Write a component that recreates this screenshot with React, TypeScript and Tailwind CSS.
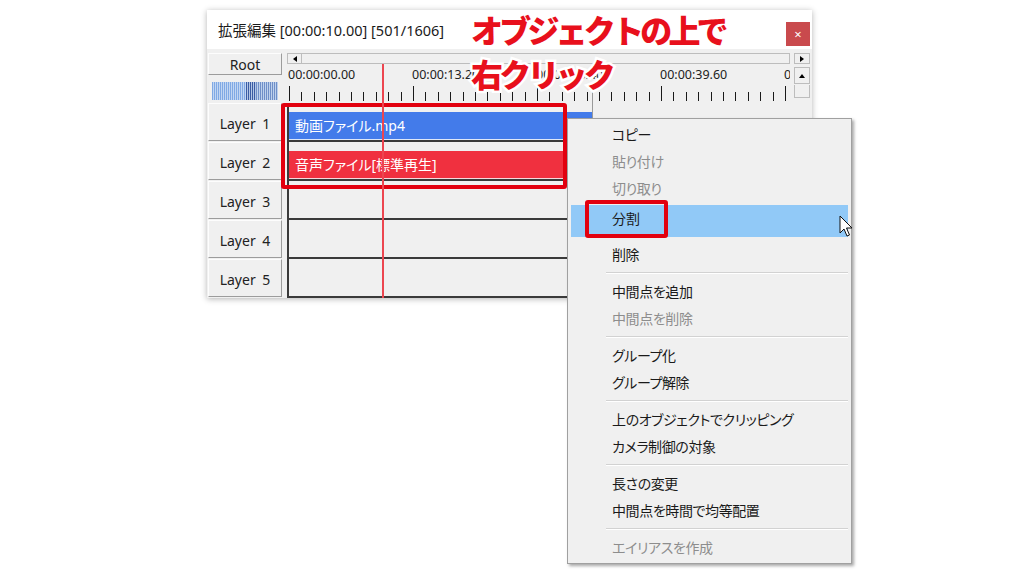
import React from "react";

function ScaleBar() {
  const rects: React.ReactNode[] = [];
  for (let x = 0; x < 66; x += 2) {
    const c = x < 33 ? "#80a9e4" : x < 43 ? "#3a5ca4" : "#6f8fc8";
    rects.push(<rect key={x} x={x} y={0} width={1.2} height={18} fill={c} />);
  }
  return (
    <svg width="66" height="18" className="block bg-[#d2e1f5]">
      {rects}
    </svg>
  );
}

function RulerTicks() {
  const ticks: React.ReactNode[] = [];
  for (let i = 0; i <= 40; i++) {
    const x = Math.round(2 + 12.4 * i) + 0.5;
    const major = i % 10 === 0;
    ticks.push(
      <line key={i} x1={x} x2={x} y1={major ? 22 : 28} y2={37} stroke="#1a1a1a" strokeWidth={1} />
    );
  }
  return (
    <svg width="503" height="39" className="absolute left-0 top-0">
      {ticks}
    </svg>
  );
}

function LayerButton({ n }: { n: number }) {
  return (
    <div className="h-[38px] mb-[1px] w-[74px] flex items-center justify-center pt-[3px] border border-t-[#fdfdfd] border-l-[#fdfdfd] border-r-[#9c9c9c] border-b-[#9c9c9c] bg-[#f0f0f0] text-[14px] text-[#222] [word-spacing:3px]">
      Layer {n}
    </div>
  );
}

function Row({ children }: { children?: React.ReactNode }) {
  return (
    <div className="h-[39px] border-l-2 border-b-2 border-[#3a3a3a] flex flex-col">{children}</div>
  );
}

function MenuItem({ label, disabled }: { label: string; disabled?: boolean }) {
  return (
    <div
      className={`h-[27px] flex items-center pl-[41px] text-[14px] tracking-[-0.4px] ${disabled ? "text-[#8d8d8d]" : "text-[#1a1a1a]"}`}
    >
      {label}
    </div>
  );
}

function Sep() {
  return (
    <div className="h-[10px] flex flex-col justify-center pl-[35px]">
      <div className="h-px bg-[#d2d2d2]" />
      <div className="h-px bg-white" />
    </div>
  );
}

export default function App() {
  return (
    <div className="relative w-[1024px] h-[576px] overflow-hidden bg-white [font-family:'Noto_Sans','Noto_Sans_CJK_JP',sans-serif] [font-feature-settings:'palt']">
      <div className="pl-[207px] pt-[10px]">
        <div className="w-[605px] h-[288px] flex flex-col bg-[#f0f0f0] shadow-[0_1px_6px_rgba(0,0,0,0.3)] overflow-hidden">
          {/* title bar */}
          <div className="h-[39px] shrink-0 bg-white flex justify-between pl-[11px] pr-[2px]">
            <span className="self-center mt-[3px] text-[14.5px] text-[#1a1a1a]">拡張編集 [00:00:10.00] [501/1606]</span>
            <div className="self-end mb-[3px] w-[24px] h-[24px] bg-[#c94a4d] flex items-center justify-center text-white text-[13px] leading-none">
              ×
            </div>
          </div>
          {/* body */}
          <div className="flex flex-1 min-h-0">
            {/* left column */}
            <div className="w-[78px] shrink-0 pl-[1px] flex flex-col">
              <div className="mt-[4px] h-[22px] w-[74px] flex items-center justify-center border border-t-[#fdfdfd] border-l-[#fdfdfd] border-r-[#9c9c9c] border-b-[#9c9c9c] text-[14px] text-[#222]">
                Root
              </div>
              <div className="mt-[7px] ml-[4px]">
                <ScaleBar />
              </div>
              <div className="mt-[3px]">
                {[1, 2, 3, 4, 5].map((n) => (
                  <LayerButton key={n} n={n} />
                ))}
              </div>
            </div>
            {/* right column */}
            <div className="flex-1 flex flex-col pl-[2px] pr-[2px] min-w-0">
              {/* horizontal scrollbar */}
              <div className="mt-[4px] h-[11px] flex shrink-0">
                <div className="w-[15px] border border-[#bdbdbd] flex items-center justify-center bg-[#f0f0f0]">
                  <div className="w-0 h-0 border-y-[3px] border-y-transparent border-r-[4px] border-r-black" />
                </div>
                <div className="flex-1 border-y border-r border-[#bdbdbd] bg-[#f0f0f0]" />
                <div className="ml-[4px] w-[16px] border border-[#bdbdbd] flex items-center justify-center">
                  <div className="w-0 h-0 border-y-[3px] border-y-transparent border-l-[4px] border-l-black" />
                </div>
              </div>
              {/* timeline + vscroll */}
              <div className="flex flex-1 min-h-0">
                <div className="relative w-[503px] shrink-0">
                  {/* ruler */}
                  <div className="relative h-[39px] overflow-hidden">
                    <RulerTicks />
                    <div className="relative flex pl-[1px] pt-[3px] text-[12.5px] text-[#222] leading-[16px] whitespace-nowrap">
                      <div className="w-[124px] shrink-0">00:00:00.00</div>
                      <div className="w-[124px] shrink-0">00:00:13.20</div>
                      <div className="w-[124px] shrink-0">00:00:26.40</div>
                      <div className="w-[124px] shrink-0">00:00:39.60</div>
                      <div className="w-[124px] shrink-0">00:00:52.80</div>
                    </div>
                  </div>
                  {/* rows */}
                  <Row>
                    <div className="mt-[9px] h-[28px] w-[303px] bg-[#437bea] border-b border-[#dfe8f8] flex items-center pl-[6px] text-[14px] text-white">
                      動画ファイル.mp4
                    </div>
                  </Row>
                  <Row>
                    <div className="mt-[9px] h-[28px] w-[303px] bg-[#f0303f] border-b border-[#f8d8dc] flex items-center pl-[6px] text-[14px] text-white">
                      音声ファイル[標準再生]
                    </div>
                  </Row>
                  <Row />
                  <Row />
                  <Row />
                  {/* end marker */}
                  <div className="absolute left-[305px] top-[26px] bottom-0 w-px bg-[#9a9a9a]" />
                  {/* current position */}
                  <div className="absolute z-10 left-[95px] top-0 bottom-0 w-[2px] bg-[#ec4650]" />
                </div>
                {/* vertical scrollbar */}
                <div className="ml-[4px] w-[16px] flex flex-col">
                  <div className="mt-[3px] h-[17px] border border-[#bdbdbd] flex items-center justify-center">
                    <div className="w-0 h-0 border-x-[3px] border-x-transparent border-b-[4px] border-b-black" />
                  </div>
                  <div className="mt-[1px] h-[13px] border-x border-b border-[#bdbdbd]" />
                </div>
              </div>
            </div>
          </div>
        </div>
      </div>

      {/* annotation box around clips */}
      <div className="absolute left-[281px] top-[103px] w-[286px] h-[86px] border-[4px] border-[#e2000f] rounded-[3px]" />

      {/* context menu */}
      <div className="absolute left-[567px] top-[118px] w-[285px] h-[446px] border border-[#a0a0a0] bg-[#f0f0f0] shadow-[2px_2px_3px_rgba(0,0,0,0.35)] pt-[2px] px-[3px]">
        <MenuItem label="コピー" />
        <MenuItem label="貼り付け" disabled />
        <MenuItem label="切り取り" disabled />
        <div className="mt-[3px] h-[32px] bg-[#91c9f7] flex items-start pt-[4px] pl-[41px] text-[14px] text-[#1a1a1a] leading-[20px]">
          分割
        </div>
        <div className="mt-[4px]">
          <MenuItem label="削除" />
        </div>
        <Sep />
        <MenuItem label="中間点を追加" />
        <MenuItem label="中間点を削除" disabled />
        <Sep />
        <MenuItem label="グループ化" />
        <MenuItem label="グループ解除" />
        <Sep />
        <MenuItem label="上のオブジェクトでクリッピング" />
        <MenuItem label="カメラ制御の対象" />
        <Sep />
        <MenuItem label="長さの変更" />
        <MenuItem label="中間点を時間で均等配置" />
        <Sep />
        <MenuItem label="エイリアスを作成" disabled />
      </div>

      {/* red box around 分割 */}
      <div className="absolute left-[585px] top-[200px] w-[83px] h-[38px] border-[4px] border-[#e2000f] rounded-[3px]" />

      {/* mouse cursor */}
      <svg className="absolute left-[839px] top-[215px]" width="16" height="24" viewBox="0 0 16 24">
        <path d="M1 1 L1 18 L5 14 L8 21 L10.5 20 L7.5 13 L13 13 Z" fill="white" stroke="#111" strokeWidth="1" strokeLinejoin="round" />
      </svg>

      {/* annotation text */}
      <div className="absolute left-[471px] top-[9px] text-[32px] font-black leading-[44px] tracking-[-3.8px] text-[#e8101c] [font-feature-settings:normal] [-webkit-text-stroke:5px_white] [paint-order:stroke_fill] whitespace-nowrap">
        <div>オブジェクトの上で</div>
        <div>右クリック</div>
      </div>
    </div>
  );
}
